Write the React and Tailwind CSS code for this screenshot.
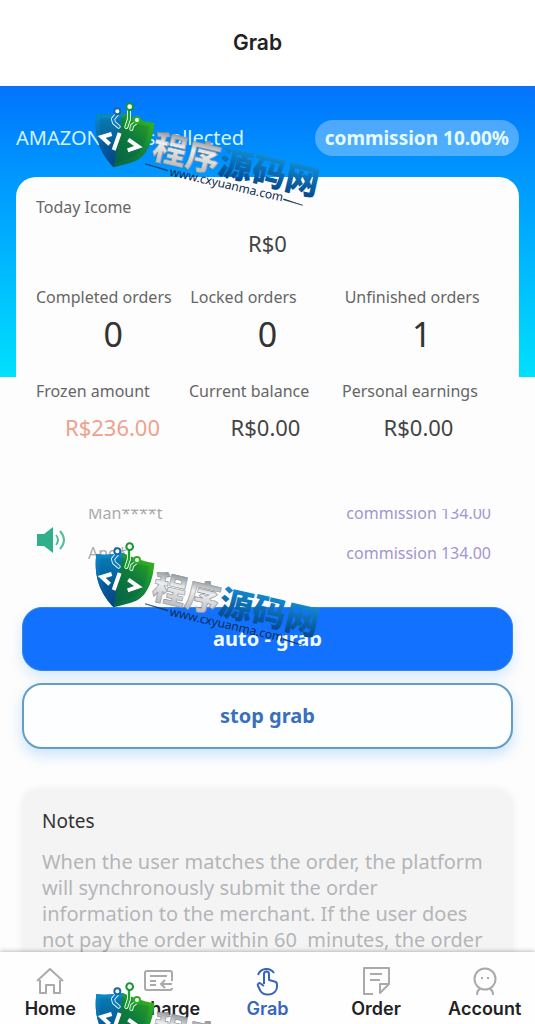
import { useId } from "react";

const uiFont = "font-['Noto_Sans','Noto_Sans_CJK_SC',sans-serif]";

const orderStats = [
  { label: "Completed orders", value: "0" },
  { label: "Locked orders", value: "0" },
  { label: "Unfinished orders", value: "1" },
];

const balanceStats = [
  { label: "Frozen amount", value: "R$236.00", tone: "text-[#eda28c]" },
  { label: "Current balance", value: "R$0.00", tone: "text-[#444444]" },
  { label: "Personal earnings", value: "R$0.00", tone: "text-[#444444]" },
];

const feed = [
  { user: "Man****t", amount: "commission 134.00" },
  { user: "And*", amount: "commission 134.00" },
];

function HomeIcon() {
  return (
    <>
      <path d="M2 15 15 3l13 12" />
      <path d="M5 14v13h6v-8h8v8h6V14" />
    </>
  );
}

function RechargeIcon() {
  return (
    <>
      <path d="M28 15V7a2 2 0 0 0-2-2H3a2 2 0 0 0-2 2v15a2 2 0 0 0 2 2h23a2 2 0 0 0 2-2" />
      <path d="M6 10h17M6 15h6M6 19h6M28 18H17M21 14l-4 4 4 4" />
    </>
  );
}

function GrabIcon() {
  return (
    <>
      <path d="M6 9a9 9 0 0 1 16-2" />
      <path d="M12 18V8a2.500 2.500 0 0 1 5 0v6l5.500 1.500a3 3 0 0 1 2.500 3V21a8 8 0 0 1-8 7.500h-2a8 8 0 0 1-6.500-3.500L6 20c-1-2 1-3.500 2.500-2.500L12 20" />
    </>
  );
}

function OrderIcon() {
  return (
    <>
      <path d="M12 28H3V2h25v16l-9 9v-9h9" />
      <path d="M9 8h12M9 14h10" />
    </>
  );
}

function AccountIcon() {
  return (
    <>
      <circle cx="15" cy="13" r="10.500" />
      <path d="M12 11v2M18 11v2M10 23c-2 1-3 3-3 6M20 23c2 1 3 3 3 6" />
    </>
  );
}

const tabs = [
  { label: "Home", Icon: HomeIcon },
  { label: "Recharge", Icon: RechargeIcon },
  { label: "Grab", Icon: GrabIcon, active: true },
  { label: "Order", Icon: OrderIcon },
  { label: "Account", Icon: AccountIcon },
];

function BrandStamp({ className, short = false }) {
  const id = useId();
  const silver = `${id}-silver`;
  const blue = `${id}-blue`;
  const left = `${id}-left`;
  const right = `${id}-right`;
  return (
    <svg className={`absolute h-[120px] w-[240px] ${className}`} viewBox="0 0 240 120" aria-hidden="true">
      <defs>
        <linearGradient id={silver} x1="0" y1="0" x2="0" y2="1">
          <stop offset="0.2" stopColor="#8d9196" />
          <stop offset="0.45" stopColor="#eceeef" />
          <stop offset="1" stopColor="#a8abaf" />
        </linearGradient>
        <linearGradient id={blue} x1="0" y1="0" x2="0" y2="1">
          <stop offset="0.15" stopColor="#1591d6" />
          <stop offset="1" stopColor="#023a80" />
        </linearGradient>
        <linearGradient id={left} x1="0" y1="0" x2="0" y2="1">
          <stop offset="0" stopColor="#0a8ccb" />
          <stop offset="1" stopColor="#06418c" />
        </linearGradient>
        <linearGradient id={right} x1="0" y1="1" x2="1" y2="0">
          <stop offset="0.1" stopColor="#04604a" />
          <stop offset="0.6" stopColor="#12893a" />
          <stop offset="1" stopColor="#3fc014" />
        </linearGradient>
      </defs>
      <g transform="scale(0.3333)">
        <path d="M34 57c28 5 58-1 80-3 27 14 60 24 94 31-4 54-23 100-56 113-22 9-46 13-66 19C54 183 24 135 34 57Z" fill={`url(#${right})`} />
        <path d="M34 57c28 5 58-1 80-3L86 217C54 183 24 135 34 57Z" fill={`url(#${left})`} />
        <path d="M46 69c25 3 46-1 65-2 24 13 48 22 81 27-5 46-24 84-48 92-20 7-37 12-55 18C60 171 38 130 46 69Z" fill="#003c45" fillOpacity="0.15" />
        <g fill="none" strokeLinecap="round" strokeLinejoin="round">
          <g stroke="#ffffff" strokeWidth="12">
            <path d="M97 56 84 72l3 11 14 12M132 44v28l-8 24M155 81l-14 11-2 10" />
          </g>
          <g strokeWidth="7">
            <path d="M97 56 84 72l3 11 14 12" stroke="#0a79bd" />
            <path d="M132 44v28l-8 24" stroke="#19a431" />
            <path d="M155 81l-14 11-2 10" stroke="#19a431" />
          </g>
        </g>
        <g fill="#ffffff" strokeWidth="6">
          <circle cx="97" cy="49" r="9" stroke="#1268b4" />
          <circle cx="134" cy="35" r="10" stroke="#15952d" />
          <circle cx="156" cy="75" r="9" stroke="#2cae25" />
        </g>
        <path d="m80 117-30 9 24 22M104 114l-18 51M130 134l30 21-32 11" fill="none" stroke="#ffffff" strokeWidth="12" />
      </g>
      <g transform="translate(85 54) rotate(13)" className="font-['Noto_Sans_CJK_SC',sans-serif]">
        <g fontSize="34" fontWeight="900" strokeLinejoin="round">
          <text x="-17" y="13" fill={`url(#${silver})`} stroke="#8b9095" strokeWidth="0.6">程序</text>
          {!short && <text x="51" y="13" fill={`url(#${blue})`}>源码网</text>}
        </g>
        {!short && (
          <>
            <text x="5" y="26" fontSize="12" className="font-['Noto_Sans',sans-serif]" fill="#0b2a4d">www.cxyuanma.com</text>
            <path d="m-21 20 23 1 1 1-24-2ZM122 23l20 2-20-1Z" fill="#12314f" stroke="#12314f" strokeWidth="0.5" />
          </>
        )}
      </g>
    </svg>
  );
}

function StatGrid({ items, valueClass }) {
  return (
    <dl className="grid grid-cols-3">
      {items.map((item) => (
        <div key={item.label}>
          <dt className="text-base leading-6 whitespace-nowrap text-[#666666]">{item.label}</dt>
          <dd className={`text-center ${valueClass} ${item.tone ?? "text-[#333333]"}`}>{item.value}</dd>
        </div>
      ))}
    </dl>
  );
}

export default function App() {
  return (
    <div className={`relative flex h-screen flex-col overflow-hidden bg-[#fdfdfd] ${uiFont}`}>
      <header className="flex h-[86px] shrink-0 items-center justify-center bg-white pr-5">
        <h1 className="font-['Inter',sans-serif] text-[21px] font-semibold text-[#222222]">Grab</h1>
      </header>

      <main className="min-h-0 flex-1 overflow-hidden bg-linear-to-b from-[#0873fd] to-[#00e0fc] bg-[length:100%_291px] bg-no-repeat px-4">
        <div className="flex h-[91px] items-center justify-between pt-3">
          <h2 className="text-xl text-[#d5f3ff]">AMAZON tasks collected</h2>
          <span className="rounded-full bg-white/30 px-[10px] py-1 text-[19px] leading-7 font-bold text-[#e6fbff]">
            commission 10.00%
          </span>
        </div>

        <section className="rounded-t-[20px] bg-[#fdfdfd] px-5 pt-[18px]">
          <p className="text-base leading-6 text-[#666666]">Today Icome</p>
          <p className="mt-2 text-center text-[22px] leading-8 text-[#444444]">R$0</p>
          <div className="mt-[26px]">
            <StatGrid items={orderStats} valueClass="mt-1 text-[34px] leading-[42px]" />
          </div>
          <div className="mt-6 pr-1">
            <StatGrid items={balanceStats} valueClass="mt-2 text-[22px] leading-8" />
          </div>
        </section>

        <section className="mt-[66px] flex h-[62px] items-center gap-5 pr-7 pl-5">
          <svg className="h-8 w-8 shrink-0" viewBox="0 0 32 32" fill="none" aria-hidden="true">
            <path d="M1 10h7l9-7v26l-9-7H1Z" fill="#2fb08a" />
            <path d="M20 11q4 5 0 10M24 7q8 9 0 18" stroke="#58bd9f" strokeWidth="2" />
          </svg>
          <div className="h-full flex-1 overflow-hidden">
            <ul className="-mt-4">
              {feed.map((entry) => (
                <li key={entry.user} className="flex h-10 items-center justify-between text-base">
                  <span className="text-[#aaaaaa]">{entry.user}</span>
                  <span className="text-[#a395cf]">{entry.amount}</span>
                </li>
              ))}
            </ul>
          </div>
        </section>

        <div className="mt-9 flex flex-col gap-3 px-[6px]">
          <button type="button" className="h-16 rounded-[20px] border border-[#3b86dd] bg-[#1272ff] text-xl font-bold text-[#effaff] shadow-[0_6px_14px_rgba(50,150,240,0.2)]">
            auto - grab
          </button>
          <button type="button" className="h-[66px] rounded-[20px] border-2 border-[#659dc4] bg-[#fdfeff] text-xl font-bold text-[#3a70ba] shadow-[0_6px_14px_rgba(50,150,240,0.25)]">
            stop grab
          </button>
        </div>

        <section className="mx-[6px] mt-10 rounded-2xl bg-[#f4f4f4] px-5 pt-4 pb-6 shadow-[0_0_8px_rgba(0,0,0,0.06)]">
          <h2 className="text-[19px] leading-8 text-[#333333]">Notes</h2>
          <p className="mt-3 text-xl leading-[26px] whitespace-pre-wrap text-[#b5b5b8]">
            {"When the user matches the order, the platform will synchronously submit the order information to the merchant. If the user does not pay the order within 60  minutes, the order"}
          </p>
        </section>
      </main>

      <nav className="relative h-[72px] shrink-0 bg-[#fefefe] shadow-[0_-1px_4px_rgba(0,0,0,0.25)]">
        <ul className="-mx-1 grid grid-cols-5 pt-[14px]">
          {tabs.map(({ label, Icon, active }) => (
            <li key={label}>
              <a
                href={`#${label.toLowerCase()}`}
                aria-current={active ? "page" : undefined}
                className={`flex flex-col items-center font-['Inter',sans-serif] text-lg leading-[26px] font-semibold ${active ? "text-[#3765bd]" : "text-[#222222]"}`}
              >
                <svg
                  className={`h-[30px] w-[30px] ${active ? "text-[#3765bd]" : "text-[#aaaaaa]"}`}
                  viewBox="0 0 30 30"
                  fill="none"
                  stroke="currentColor"
                  strokeWidth="2"
                  strokeLinejoin="round"
                  aria-hidden="true"
                >
                  <Icon />
                </svg>
                {label}
              </a>
            </li>
          ))}
        </ul>
      </nav>

      <div className="pointer-events-none absolute inset-0 overflow-hidden">
        <BrandStamp className="top-[95px] left-[85px]" />
        <BrandStamp className="top-[535px] left-[85px]" />
        <BrandStamp className="top-[975px] left-[85px]" short />
      </div>
    </div>
  );
}
